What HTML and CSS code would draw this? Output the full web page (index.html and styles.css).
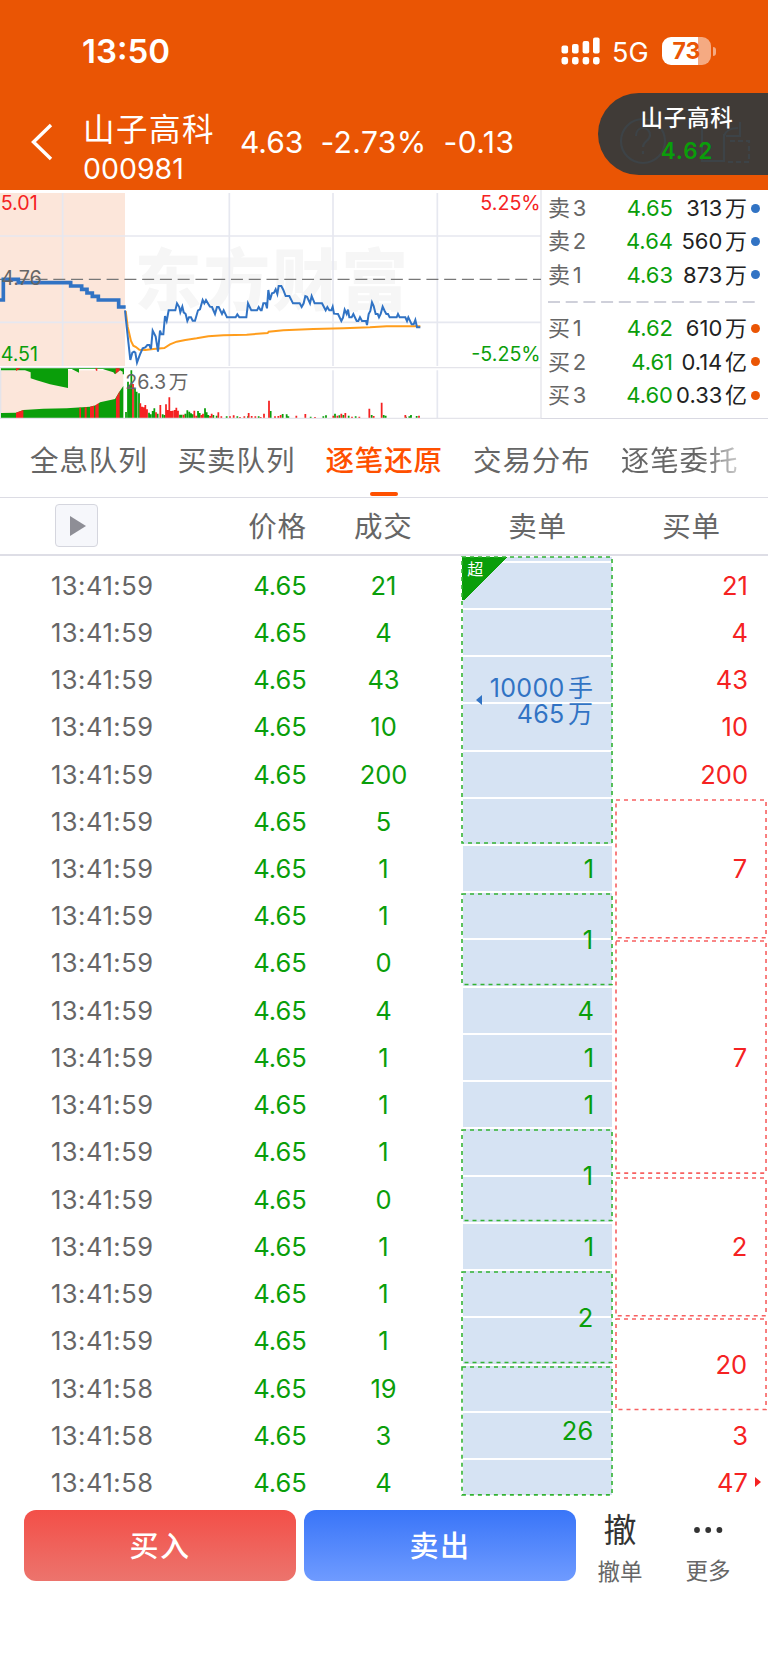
FILE: index.html
```
<!DOCTYPE html>
<html lang="zh-CN">
<head>
  <meta charset="utf-8">
  <title>山子高科 000981</title>
  <link rel="stylesheet" href="styles.css">
</head>
<body>
  <header class="top">
    <div class="status">
      <span class="clock">13:50</span>
      <svg class="signal" width="40" height="28" viewBox="0 0 40 28" fill="#fff">
        <rect x="0.5" y="8.5" width="6.6" height="8" rx="2"/>
        <rect x="11" y="7" width="6.6" height="9.5" rx="2"/>
        <rect x="21.6" y="4" width="6.6" height="12.5" rx="2"/>
        <rect x="32" y="0.5" width="6.6" height="16" rx="2"/>
        <rect x="0.5" y="20" width="6.6" height="7.5" rx="2.4"/>
        <rect x="11" y="20" width="6.6" height="7.5" rx="2.4"/>
        <rect x="21.6" y="20" width="6.6" height="7.5" rx="2.4"/>
        <rect x="32" y="20" width="6.6" height="7.5" rx="2.4"/>
      </svg>
      <span class="net">5G</span>
      <span class="battery">73</span>
      <span class="battery-cap"></span>
    </div>
    <div class="nav">
      <svg class="back" width="22" height="38" viewBox="0 0 22 38" fill="none" stroke="#fff" stroke-width="3.4">
        <path d="M20 2 L2.5 19 L20 36"/>
      </svg>
      <div class="stock">
        <div class="name">山子高科</div>
        <div class="code">000981</div>
      </div>
      <div class="quote"><span>4.63</span><span class="diff">-2.73%</span><span class="diff">-0.13</span></div>
    </div>
    <div class="pill">
      <svg class="ghost" width="150" height="60" viewBox="0 0 150 60" fill="none" stroke="#3d4347" stroke-width="2.2">
        <circle cx="25" cy="27" r="22"/>
        <path d="M18 22c0-5 3-8 7-8s7 3 7 7c0 6-7 6-7 12M25 37v3"/>
        <path d="M92 9h-8v38h22V20M106 22c2-6 6-8 14-8M122 8v14h-14"/>
        <path d="M112 27h19v21h-22" stroke-dasharray="5 3"/>
      </svg>
      <div class="pill-name">山子高科</div>
      <div class="pill-price">4.62</div>
    </div>
  </header>

  <section class="market">
    <!-- one unit is a third of a pixel -->
    <svg class="chart" width="542" height="229" viewBox="0 15 1626 687">
      <rect class="pre" x="0" y="24" width="375" height="519"/>
      <rect class="pre" x="0" y="556" width="370" height="143"/>
      <text class="mark" x="404" y="360" textLength="820" lengthAdjust="spacing">东方财富</text>
      <path class="grid" d="M188 24V543M688 24V543M999 24V543M1312 24V543M688 556V699M999 556V699M1312 556V699M0 153H1623M0 412H1623"/>
      <path class="line" d="M0 548H1623M1623 15V699M2 548V699"/>
      <path class="mid" d="M0 283H1623"/>

      <path class="down-fill" d="M3 699V684L48 683L70 675L130 671L200 670L270 665L290 660L300 652L345 642L358 620L370 603V699ZM3 550H372V568H368V560L360 556L345 568L340 562L310 553V552H237V563L215 552H204V609L150 598L110 586L92 580V562L75 556H3Z"/>
      <path class="up-fill" d="M48 699V683L70 675V699ZM48 550H62L48 558ZM238 699V668H243V699ZM254 699V667H260V699ZM270 699V665L282 662V699ZM286 699V661L296 654V699ZM348 699V639L359 618V699ZM347 550H359V556L347 566ZM286 550H292V557H288Z"/>
      <path class="vol down" d="M378 699V681M384 699V590M389 699V600M394 699V556M405 699V612M410 699V620M417 699V625M447 699V683M452 699V688M458 699V678M463 699V670M473 699V686M488 699V688M494 699V690M540 699V689M545 699V689M556 699V686M562 699V676M568 699V680M573 699V685M578 699V688M594 699V678M599 699V684M615 699V670M620 699V682M625 699V690M640 699V690M650 699V692M680 699V694M712 699V694M744 699V694M776 699V694M812 699V678M848 699V687M860 699V688M865 699V694M932 699V695M970 699V694M978 699V691M1005 699V686M1018 699V691M1030 699V690M1046 699V692M1067 699V694M1115 699V690M1151 699V690M1157 699V692M1218 699V695M1228 699V694M1233 699V690M1250 699V693"/>
      <path class="vol up" d="M399 699V597M421 699V655M426 699V665M431 699V667M436 699V660M441 699V673M468 699V682M481 699V660M498 699V658M503 699V675M508 699V637M513 699V678M518 699V677M524 699V675M529 699V668M534 699V677M551 699V689M583 699V677M589 699V692M604 699V690M609 699V686M630 699V693M635 699V686M655 699V682M664 699V694M690 699V694M701 699V691M720 699V696M733 699V694M746 699V684M755 699V693M766 699V694M782 699V696M792 699V686M807 699V647M825 699V694M835 699V693M842 699V690M889 699V692M916 699V687M945 699V696M1000 699V692M1012 699V692M1024 699V686M1036 699V684M1056 699V695M1078 699V695M1108 699V671M1121 699V693M1145 699V653M1216 699V690M1257 699V692"/>
      <path class="line base" d="M0 700H1623"/>

      <path class="avg" d="M377 378L383 425L393 468L400 482L408 486L418 494L436 495L460 492L493 489L510 478L530 470L556 465L590 460L625 454L670 451L740 449L803 444L806 440L850 436L940 432L1030 430L1110 427L1160 424H1261"/>
      <path class="price-pre" d="M0 345H10V283H55V293H212V303H245V313H261V324H277V334H295V345H356V366H377"/>
      <path class="price-line" d="M375 376L380 425L391 525L397 503L402 500L406 503L411 533L420 508L428 490L436 487L442 480H448L453 492L458 437L467 455L474 500L480 437L484 448H490L495 393L500 408L506 376H526L531 355L538 367L541 382L547 365L551 382L557 387L562 408L567 397H573L578 407H585L594 376L600 373L608 345L613 355L618 345L625 357L630 365L636 366L645 387L651 366H656L666 387L671 376L681 397H707L712 388L718 397H739L744 355L754 376H771L776 366L782 376H785L790 355H797L801 370L805 315L810 345L816 325L822 323L827 313L832 327L836 303H844L850 315L857 333H868L879 355H899L905 366L911 355L916 333L921 335L930 355L935 333L944 355H966L977 376L982 366L988 376H994L998 365L1002 386L1014 387L1024 408L1029 398L1034 374L1040 387L1044 374L1048 397H1055L1060 387L1070 408H1075L1080 397L1086 408H1098L1101 420L1106 387L1111 378L1116 352L1121 363L1127 387H1133L1137 397L1142 387L1148 365L1154 378L1159 387H1164L1169 397H1190L1194 387L1199 397H1216L1221 408L1225 397L1235 418H1241L1246 405L1251 427H1261"/>

      <text class="up-text" x="2" y="74">5.01</text>
      <text class="up-text" x="1622" y="74" text-anchor="end">5.25%</text>
      <text class="gray-text" x="4" y="300">4.76</text>
      <text class="down-text" x="2" y="527">4.51</text>
      <text class="down-text" x="1622" y="527" text-anchor="end">-5.25%</text>
      <text class="gray-text" x="376" y="612">26.3 万</text>
    </svg>

    <div class="book">
      <div class="level"><span>卖 3</span><b>4.65</b><em>313 万</em><i></i></div>
      <div class="level"><span>卖 2</span><b>4.64</b><em>560 万</em><i></i></div>
      <div class="level"><span>卖 1</span><b>4.63</b><em>873 万</em><i></i></div>
      <svg class="split" width="208" height="2"><path d="M0 1H208" stroke="#cfd0da" stroke-width="2" stroke-dasharray="12 5.7"/></svg>
      <div class="level buy"><span>买 1</span><b>4.62</b><em>610 万</em><i></i></div>
      <div class="level buy"><span>买 2</span><b>4.61</b><em>0.14 亿</em><i></i></div>
      <div class="level buy"><span>买 3</span><b>4.60</b><em>0.33 亿</em><i></i></div>
    </div>
  </section>

  <nav class="tabs">
    <a>全息队列</a>
    <a>买卖队列</a>
    <a class="on">逐笔还原</a>
    <a>交易分布</a>
    <a class="fade">逐笔委托</a>
  </nav>

  <div class="cols thead">
    <span class="play"><svg width="16" height="20"><path d="M0 0L16 10L0 20Z" fill="#8e8e96"/></svg></span>
    <span class="th-price">价格</span>
    <span class="th-amount">成交</span>
    <span class="th-sell">卖单</span>
    <span class="th-buy">买单</span>
  </div>
  <div class="cols ticks" id="ticks"></div>

  <footer class="actions">
    <button class="btn buy-btn">买入</button>
    <button class="btn sell-btn">卖出</button>
    <div class="act"><span class="act-icon">撤</span><span>撤单</span></div>
    <div class="act">
      <svg class="act-icon" width="30" height="40" viewBox="0 0 30 40" fill="#333"><circle cx="4" cy="20" r="2.9"/><circle cx="15.2" cy="20" r="2.9"/><circle cx="26.4" cy="20" r="2.9"/></svg>
      <span>更多</span>
    </div>
  </footer>

  <script src="ticks.js"></script>
</body>
</html>
```
FILE: ticks.js
```
const volumes = [21, 4, 43, 10, 200, 5, 1, 1, 0, 4, 1, 1, 1, 0, 1, 1, 1, 19, 3, 4]

// [first grid line, last grid line, text, framed]
const sells = [
  [1, 8, '10000 手<br>465 万', true, 'big'],
  [8, 9, '1'],
  [9, 11, '1', true],
  [11, 12, '4'],
  [12, 13, '1'],
  [13, 14, '1'],
  [14, 16, '1', true],
  [16, 17, '1'],
  [17, 19, '2', true],
  [19, 22, '26', true]
]
const buys = [
  [2, 3, '21'],
  [3, 4, '4'],
  [4, 5, '43'],
  [5, 6, '10'],
  [6, 7, '200'],
  [7, 10, '7', true],
  [10, 15, '7', true],
  [15, 18, '2', true],
  [18, 20, '20', true],
  [20, 21, '3'],
  [21, 22, '47', false, 'more']
]

let html = '<div class="fill" style="grid-row: 1"></div>'

volumes.forEach((v, i) => {
  const row = `style="grid-row: ${i + 2}"`
  html += `<div class="time" ${row}>13:41:${i < 17 ? 59 : 58}</div>`
  html += `<div class="price" ${row}>4.65</div>`
  html += `<div class="amount" ${row}>${v}</div>`
  html += `<div class="fill" ${row}></div>`
})

const order = side => ([from, to, text, framed, extra]) => {
  const frame = framed ? '<svg class="frame"><rect width="100%" height="100%"/></svg>' : ''
  html += `<div class="order ${side} ${framed ? 'framed' : ''} ${extra || ''}" style="grid-row: ${from} / ${to}">${frame}<span>${text}</span></div>`
}
sells.forEach(order('sell'))
buys.forEach(order('bid'))

document.querySelector('#ticks').innerHTML = html
```
FILE: styles.css
```
* {
  box-sizing: border-box;
}

body {
  margin: 0;
  width: 768px;
  height: 1663px;
  overflow: hidden;
  background: #fff;
  color: #666;
  font-family: Inter, "Noto Sans CJK SC", sans-serif;
}

/* header */
.top {
  position: relative;
  height: 190px;
  background: #ea5504;
  color: #fff;
}

.status {
  display: flex;
  align-items: center;
  height: 102px;
  padding-left: 82px;
}

.clock {
  width: 479px;
  font-size: 33px;
  font-weight: 600;
}

.net {
  width: 49px;
  padding: 2px 0 0 11px;
  font-size: 27px;
  white-space: nowrap;
}

.battery {
  width: 49px;
  height: 28px;
  margin-left: 12px;
  border-radius: 9px;
  background: linear-gradient(to right, #fff 36px, #f5aa82 36px);
  color: #ea5504;
  font-size: 23px;
  font-weight: 700;
  line-height: 28px;
  text-align: center;
}

.battery-cap {
  width: 3px;
  height: 9px;
  margin-left: 2px;
  border-radius: 0 4px 4px 0;
  background: #f5aa82;
}

.nav {
  display: flex;
  height: 88px;
  padding-left: 31px;
}

.back {
  margin-top: 21px;
}

.stock {
  width: 157px;
  margin-left: 30px;
}

.name {
  margin-top: 8px;
  font-size: 31.5px;
  line-height: 40px;
  letter-spacing: 1.5px;
}

.code {
  font-size: 28.5px;
  line-height: 38px;
}

.quote {
  display: flex;
  gap: 17px;
  font-size: 30px;
  line-height: 80px;
}

.diff {
  letter-spacing: 0.4px;
}

.pill {
  position: absolute;
  top: 93px;
  right: 0;
  width: 170px;
  height: 82px;
  padding: 7px 0 0 8px;
  border-radius: 41px 0 0 41px;
  background: #403b37;
  text-align: center;
}

.ghost {
  position: absolute;
  left: 20px;
  top: 21px;
}

.pill-name,
.pill-price {
  position: relative;
  font-size: 22.5px;
  line-height: 36px;
  font-weight: 500;
}

.pill-name {
  letter-spacing: 0.8px;
}

.pill-price {
  line-height: 30px;
  color: #0a9e0a;
  font-weight: 600;
  letter-spacing: 0.8px;
}

/* chart and order book */
.market {
  display: flex;
  height: 229px;
  border-bottom: 1px solid #d9d9e2;
}

.chart {
  flex: none;
}

.chart path {
  fill: none;
}

.chart .pre {
  fill: #fce6da;
}

.chart .mark {
  fill: #f6f6f6;
  font-size: 200px;
  font-weight: 900;
}

.chart .grid {
  stroke: #e6e8f0;
  stroke-width: 5;
}

.chart .line {
  stroke: #e4e4ea;
  stroke-width: 4;
}

.chart .mid {
  stroke: #777;
  stroke-width: 4;
  stroke-dasharray: 36 17.3;
}

.chart .down-fill {
  fill: #0a9e0a;
}

.chart .up-fill {
  fill: #f52222;
}

.chart .vol {
  stroke-width: 5.3;
}

.chart .up {
  stroke: #f52222;
}

.chart .down {
  stroke: #0a9e0a;
}

.chart .avg {
  stroke: #ff9d1c;
  stroke-width: 6;
}

.chart .price-line {
  stroke: #3173c4;
  stroke-width: 6;
}

.chart .price-pre {
  stroke: #3173c4;
  stroke-width: 11;
}

.chart text {
  font-size: 59px;
  word-spacing: -9px;
}

.chart .up-text {
  fill: #f52222;
}

.chart .down-text {
  fill: #0a9e0a;
}

.chart .gray-text {
  fill: #666;
}

.book {
  flex: 1;
  padding: 1px 8px 0 6px;
}

.level {
  display: grid;
  grid-template-columns: 54px 71px 74px 13px;
  align-items: center;
  height: 33.4px;
  font-size: 22px;
  line-height: 33.4px;
  white-space: nowrap;
}

.level span,
.level b,
.level em {
  padding-top: 1px;
}

.level b {
  color: #0a9e0a;
  font-weight: 400;
  text-align: right;
}

.level em {
  color: #222;
  font-style: normal;
  justify-self: end;
}

.level span,
.level em {
  word-spacing: -3.5px;
}

.level i {
  width: 9px;
  height: 9px;
  border-radius: 50%;
  background: #3173c4;
  justify-self: end;
}

.level.buy i {
  background: #ea5504;
}

.split {
  display: block;
  margin: 10px 0 8px;
}

/* tabs */
.tabs {
  display: flex;
  gap: 30px;
  height: 79px;
  padding-left: 30px;
  border-bottom: 1px solid #dcdce4;
  font-size: 28.5px;
  line-height: 83px;
  letter-spacing: 0.9px;
}

.tabs a {
  flex: none;
  width: 117.7px;
}

.tabs .on {
  display: flex;
  flex-direction: column;
  align-items: center;
  color: #ff5000;
  font-weight: 500;
}

.tabs .on::after {
  content: '';
  width: 28px;
  height: 4px;
  margin-top: -10px;
  border-radius: 2px;
  background: #ff5000;
}

.tabs .fade {
  background: linear-gradient(to right, #666 70%, #ccc);
  background-clip: text;
  color: transparent;
}

/* tick table */
.cols {
  display: grid;
  grid-template-columns: 204px 152px 55px 51px 151px 3px 151px;
}

.thead {
  height: 58px;
  border-bottom: 2px solid #dedee6;
  font-size: 28.5px;
  line-height: 58px;
  letter-spacing: 0.8px;
  text-align: center;
}

.thead > span {
  white-space: nowrap;
}

.play {
  display: flex;
  align-items: center;
  justify-content: center;
  width: 43px;
  height: 43px;
  margin: 6px 0 0 55px;
  padding-left: 3px;
  border: 1px solid #d5d6de;
  border-radius: 4px;
  background: #f6f7fb;
}

.th-price {
  padding-right: 5px;
}

.th-amount {
  margin-left: -2px;
}

.th-sell {
  grid-column: 5;
}

.th-buy {
  grid-column: 7;
}

.ticks {
  height: 939px;
  grid-template-rows: 5.6px repeat(19, 47.24px) 37.4px;
  font-size: 25.5px;
  line-height: 47.24px;
}

.time {
  grid-column: 1;
  padding-left: 51px;
  letter-spacing: 0.5px;
}

.price {
  grid-column: 2;
  color: #0a9e0a;
  text-align: center;
}

.amount {
  grid-column: 3;
  color: #0a9e0a;
  text-align: center;
}

.fill {
  grid-column: 5;
  margin-left: 1px;
  border: solid #fff;
  border-width: 1px 1px 1px 0;
  background: #d6e3f3;
}

.order {
  position: relative;
  display: flex;
  justify-content: flex-end;
  padding-right: 19px;
}

.order.framed {
  align-items: center;
  margin: 2px 0.8px 2px 0.2px;
}

.order.big {
  margin-top: 1px;
}

.sell {
  grid-column: 5;
  color: #0a9e0a;
}

.bid {
  grid-column: 7;
  color: #f52222;
}

.frame {
  position: absolute;
  left: 0;
  top: 0;
  width: 100%;
  height: 100%;
  overflow: visible;
}

.frame rect {
  fill: none;
  stroke: #33b333;
  stroke-width: 1.6;
  stroke-dasharray: 4 4;
}

.bid .frame rect {
  stroke: #f76060;
}

.sell.big {
  color: #3173c4;
  font-size: 25px;
  line-height: 26px;
  letter-spacing: 0.3px;
  word-spacing: -4px;
  text-align: right;
}

.big span {
  padding-top: 1px;
}

/* corner flag for extra large orders */
.big::before {
  content: '超';
  position: absolute;
  left: 0;
  top: 0;
  width: 43px;
  height: 43px;
  padding: 0 0 0 5px;
  background: linear-gradient(135deg, #0a9e0a 50%, transparent 50%);
  color: #fff;
  font-size: 16px;
  line-height: 24px;
  text-align: left;
}

.big::after,
.more::after {
  content: '';
  position: absolute;
  border: solid transparent;
  border-width: 5px 6px;
}

.big::after {
  left: 8px;
  top: 138px;
  border-right-color: #3173c4;
}

.more::after {
  right: 0;
  top: 18px;
  border-left-color: #f52222;
}

/* bottom actions */
.actions {
  display: flex;
  height: 86px;
  padding: 15px 0 0 24px;
}

.btn {
  width: 272px;
  height: 71px;
  margin-right: 8px;
  padding: 2px 0 0;
  border: 0;
  border-radius: 12px;
  color: #fff;
  font: 500 29px/69px Inter, "Noto Sans CJK SC", sans-serif;
  letter-spacing: 1.5px;
}

.buy-btn {
  background: linear-gradient(#f34f48, #ec746d);
}

.sell-btn {
  background: linear-gradient(#3975f8, #6f9bff);
}

.act {
  display: flex;
  flex-direction: column;
  align-items: center;
  width: 88px;
  margin-left: -8px;
  font-size: 22.5px;
  line-height: 41px;
}

.act + .act {
  margin-left: 0;
}

.act-icon {
  flex: none;
  color: #333;
  font-size: 33px;
}
```
